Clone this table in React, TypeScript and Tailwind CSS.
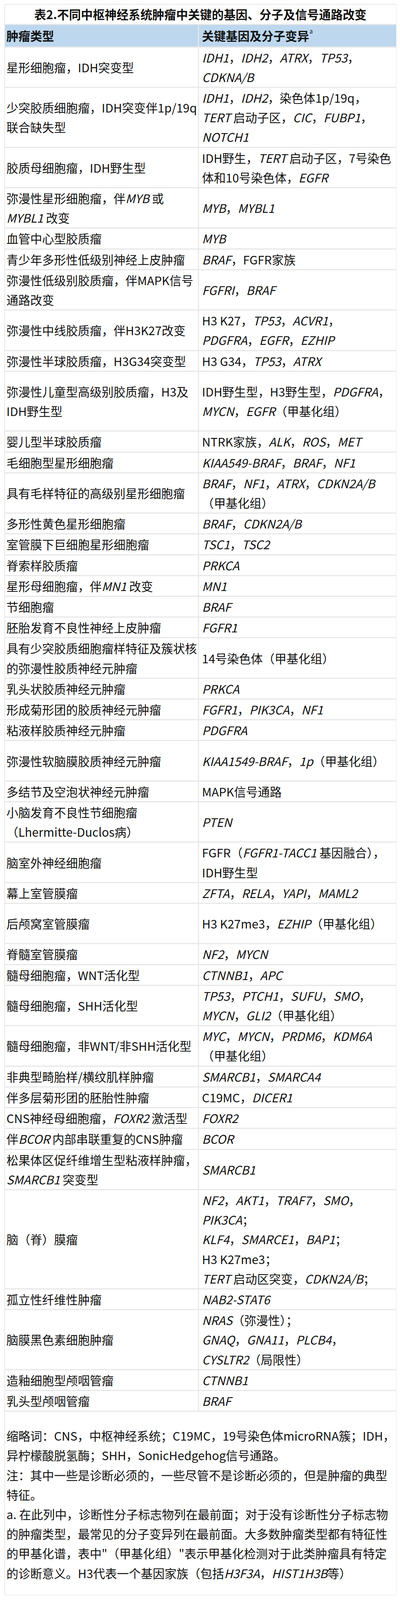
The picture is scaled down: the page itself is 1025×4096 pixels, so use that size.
// Table 2: key gene / molecular / pathway alterations across CNS tumour types.
// Rows are data; *text* marks italic gene symbols.
import React from 'react';

interface Row {
  h: 1 | 2 | 3 | 5;
  l: string[];
  r: string[];
}

const MIN_H: Record<Row['h'], string> = {
  1: 'min-h-[50.2px]',
  2: 'min-h-[100.4px]',
  3: 'min-h-[150.6px]',
  5: 'min-h-[251px]',
};

const ROWS: Row[] = [
  { h: 2, l: ['星形细胞瘤，IDH突变型'], r: ['*IDH1*，*IDH2*，*ATRX*，*TP53*，', '*CDKNA/B*'] },
  {
    h: 3,
    l: ['少突胶质细胞瘤，IDH突变伴1p/19q', '联合缺失型'],
    r: ['*IDH1*，*IDH2*，染色体1p/19q，', '*TERT* 启动子区，*CIC*，*FUBP1*，', '*NOTCH1*'],
  },
  { h: 2, l: ['胶质母细胞瘤，IDH野生型'], r: ['IDH野生，*TERT* 启动子区，7号染色', '体和10号染色体，*EGFR*'] },
  { h: 2, l: ['弥漫性星形细胞瘤，伴*MYB* 或', '*MYBL1* 改变'], r: ['*MYB*，*MYBL1*'] },
  { h: 1, l: ['血管中心型胶质瘤'], r: ['*MYB*'] },
  { h: 1, l: ['青少年多形性低级别神经上皮肿瘤'], r: ['*BRAF*，FGFR家族'] },
  { h: 2, l: ['弥漫性低级别胶质瘤，伴MAPK信号', '通路改变'], r: ['*FGFRI*，*BRAF*'] },
  { h: 2, l: ['弥漫性中线胶质瘤，伴H3K27改变'], r: ['H3 K27，*TP53*，*ACVR1*，', '*PDGFRA*，*EGFR*，*EZHIP*'] },
  { h: 1, l: ['弥漫性半球胶质瘤，H3G34突变型'], r: ['H3 G34，*TP53*，*ATRX*'] },
  {
    h: 3,
    l: ['弥漫性儿童型高级别胶质瘤，H3及', 'IDH野生型'],
    r: ['IDH野生型，H3野生型，*PDGFRA*，', '*MYCN*，*EGFR*（甲基化组）'],
  },
  { h: 1, l: ['婴儿型半球胶质瘤'], r: ['NTRK家族，*ALK*，*ROS*，*MET*'] },
  { h: 1, l: ['毛细胞型星形细胞瘤'], r: ['*KIAA549-BRAF*，*BRAF*，*NF1*'] },
  { h: 2, l: ['具有毛样特征的高级别星形细胞瘤'], r: ['*BRAF*，*NF1*，*ATRX*，*CDKN2A/B*', '（甲基化组）'] },
  { h: 1, l: ['多形性黄色星形细胞瘤'], r: ['*BRAF*，*CDKN2A/B*'] },
  { h: 1, l: ['室管膜下巨细胞星形细胞瘤'], r: ['*TSC1*，*TSC2*'] },
  { h: 1, l: ['脊索样胶质瘤'], r: ['*PRKCA*'] },
  { h: 1, l: ['星形母细胞瘤，伴*MN1* 改变'], r: ['*MN1*'] },
  { h: 1, l: ['节细胞瘤'], r: ['*BRAF*'] },
  { h: 1, l: ['胚胎发育不良性神经上皮肿瘤'], r: ['*FGFR1*'] },
  { h: 2, l: ['具有少突胶质细胞瘤样特征及簇状核', '的弥漫性胶质神经元肿瘤'], r: ['14号染色体（甲基化组）'] },
  { h: 1, l: ['乳头状胶质神经元肿瘤'], r: ['*PRKCA*'] },
  { h: 1, l: ['形成菊形团的胶质神经元肿瘤'], r: ['*FGFR1*，*PIK3CA*，*NF1*'] },
  { h: 1, l: ['粘液样胶质神经元肿瘤'], r: ['*PDGFRA*'] },
  { h: 2, l: ['弥漫性软脑膜胶质神经元肿瘤'], r: ['*KIAA1549-BRAF*，*1p*（甲基化组）'] },
  { h: 1, l: ['多结节及空泡状神经元肿瘤'], r: ['MAPK信号通路'] },
  { h: 2, l: ['小脑发育不良性节细胞瘤', '（Lhermitte-Duclos病）'], r: ['*PTEN*'] },
  { h: 2, l: ['脑室外神经细胞瘤'], r: ['FGFR（*FGFR1-TACC1* 基因融合），', 'IDH野生型'] },
  { h: 1, l: ['幕上室管膜瘤'], r: ['*ZFTA*，*RELA*，*YAPI*，*MAML2*'] },
  { h: 2, l: ['后颅窝室管膜瘤'], r: ['H3 K27me3，*EZHIP*（甲基化组）'] },
  { h: 1, l: ['脊髓室管膜瘤'], r: ['*NF2*，*MYCN*'] },
  { h: 1, l: ['髓母细胞瘤，WNT活化型'], r: ['*CTNNB1*，*APC*'] },
  { h: 2, l: ['髓母细胞瘤，SHH活化型'], r: ['*TP53*，*PTCH1*，*SUFU*，*SMO*，', '*MYCN*，*GLI2*（甲基化组）'] },
  { h: 2, l: ['髓母细胞瘤，非WNT/非SHH活化型'], r: ['*MYC*，*MYCN*，*PRDM6*，*KDM6A*', '（甲基化组）'] },
  { h: 1, l: ['非典型畸胎样/横纹肌样肿瘤'], r: ['*SMARCB1*，*SMARCA4*'] },
  { h: 1, l: ['伴多层菊形团的胚胎性肿瘤'], r: ['C19MC，*DICER1*'] },
  { h: 1, l: ['CNS神经母细胞瘤，*FOXR2* 激活型'], r: ['*FOXR2*'] },
  { h: 1, l: ['伴*BCOR* 内部串联重复的CNS肿瘤'], r: ['*BCOR*'] },
  { h: 2, l: ['松果体区促纤维增生型粘液样肿瘤，', '*SMARCB1* 突变型'], r: ['*SMARCB1*'] },
  {
    h: 5,
    l: ['脑（脊）膜瘤'],
    r: [
      '*NF2*，*AKT1*，*TRAF7*，*SMO*，',
      '*PIK3CA*；',
      '*KLF4*，*SMARCE1*，*BAP1*；',
      'H3 K27me3；',
      '*TERT* 启动区突变，*CDKN2A/B*；',
    ],
  },
  { h: 1, l: ['孤立性纤维性肿瘤'], r: ['*NAB2-STAT6*'] },
  { h: 3, l: ['脑膜黑色素细胞肿瘤'], r: ['*NRAS*（弥漫性）；', '*GNAQ*，*GNA11*，*PLCB4*，', '*CYSLTR2*（局限性）'] },
  { h: 1, l: ['造釉细胞型颅咽管瘤'], r: ['*CTNNB1*'] },
  { h: 1, l: ['乳头型颅咽管瘤'], r: ['*BRAF*'] },
];

const NOTES: string[] = [
  '缩略词：CNS，中枢神经系统；C19MC，19号染色体microRNA簇；IDH，',
  '异柠檬酸脱氢酶；SHH，SonicHedgehog信号通路。',
  '注：其中一些是诊断必须的，一些尽管不是诊断必须的，但是肿瘤的典型',
  '特征。',
  'a. 在此列中，诊断性分子标志物列在最前面；对于没有诊断性分子标志物',
  '的肿瘤类型，最常见的分子变异列在最前面。大多数肿瘤类型都有特征性',
  '的甲基化谱，表中"（甲基化组）"表示甲基化检测对于此类肿瘤具有特定',
  '的诊断意义。H3代表一个基因家族（包括*H3F3A*，*HIST1H3B*等）',
];

function Rich({ s }: { s: string }) {
  const parts = s.split('*');
  return (
    <>
      {parts.map((p, i) =>
        i % 2 ? (
          <i key={i} className="italic">
            {p}
          </i>
        ) : (
          <span key={i}>{p}</span>
        ),
      )}
    </>
  );
}

function Cell({ lines, h, right }: { lines: string[]; h: Row['h']; right?: boolean }) {
  return (
    <div className={`flex flex-col justify-center bg-white ${right ? 'pl-[8px]' : 'pl-[4px]'} ${MIN_H[h]}`}>
      {lines.map((ln, i) => (
        <div key={i} className="whitespace-nowrap">
          <Rich s={ln} />
        </div>
      ))}
    </div>
  );
}

export default function App() {
  return (
    <div className="min-h-screen bg-white pt-[10px] font-['Noto_Sans_CJK_SC','Noto_Sans',sans-serif] text-[30.5px] leading-[50.2px] text-[#111]">
      <div className="ml-[11px] grid w-[1005px] grid-cols-[494px_1fr] gap-[3px] bg-[#e8e8e8] p-[1.5px]">
        <div className="col-span-2 flex h-[49.4px] items-center justify-center bg-white font-bold whitespace-nowrap">
          表2.不同中枢神经系统肿瘤中关键的基因、分子及信号通路改变
        </div>

        <div className="flex h-[54.7px] items-center bg-[#bdd7ee] pl-[4px] font-bold">肿瘤类型</div>
        <div className="flex h-[54.7px] items-center bg-[#bdd7ee] pl-[8px] font-bold">
          关键基因及分子变异
          <span className="relative -top-[12px] ml-[1px] text-[15px] leading-none font-normal">a</span>
        </div>

        {ROWS.map((row, i) => (
          <React.Fragment key={i}>
            <Cell lines={row.l} h={row.h} />
            <Cell lines={row.r} h={row.h} right />
          </React.Fragment>
        ))}

        <div className="col-span-2 bg-white pt-[36px] pb-[31px] pl-[4px]">
          {NOTES.map((ln, i) => (
            <div key={i} className="whitespace-nowrap">
              <Rich s={ln} />
            </div>
          ))}
        </div>
      </div>
    </div>
  );
}
